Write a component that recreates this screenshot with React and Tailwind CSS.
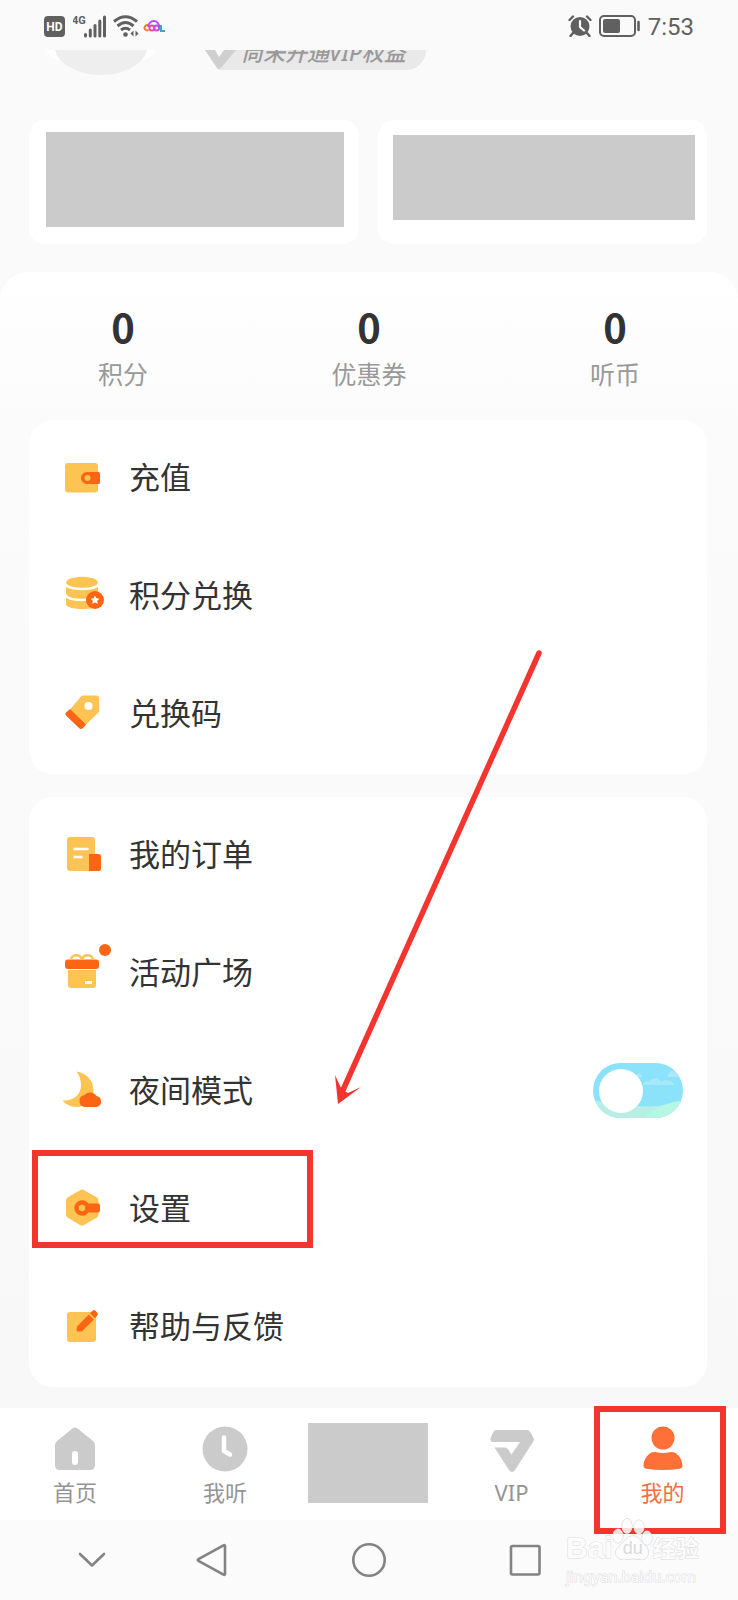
import React, { useState } from 'react'

const YELLOW = '#fdc453';
const ORANGE = '#fb6514';

const WalletIcon = () => (
  <svg viewBox="0 0 44 44" className="w-11 h-11 shrink-0">
    <rect x="5" y="8" width="33" height="29.500" rx="3" fill={YELLOW} />
    <path d="M22 17H38.500Q40 17 40 18.500V27.500Q40 29 38.500 29H27A6 6 0 0 1 27 17Z" fill={ORANGE} />
    <circle cx="27.500" cy="23" r="3" fill={YELLOW} />
  </svg>
)

const CoinsIcon = () => (
  <svg viewBox="0 0 44 44" className="w-11 h-11 shrink-0">
    <path d="M6 9V31C6 33.800 12 36 22 36S38 33.800 38 31V9Z" fill={YELLOW} />
    <path d="M5 10.500C7 15 14 16 22 16S37 15 39 10.500M5 21.500C7 26 14 27 22 27S37 26 39 21.500" fill="none" stroke="#fff" strokeWidth="2.400" />
    <ellipse cx="22" cy="9" rx="15.500" ry="5.200" fill={YELLOW} />
    <circle cx="35" cy="27" r="9" fill={ORANGE} />
    <path d="M35 22.500L36.400 25.300L39.400 25.700L37.200 27.800L37.700 30.800L35 29.400L32.300 30.800L32.800 27.800L30.600 25.700L33.600 25.300Z" fill="#fff" />
  </svg>
)

const TagIcon = () => (
  <svg viewBox="0 0 44 44" className="w-11 h-11 shrink-0">
    <path d="M23 4.500H36.500Q39 4.500 39 7V19.500Q39 21 38 22L25.500 34L10 18.500L20.500 6Q21.500 4.500 23 4.500Z" fill={YELLOW} />
    <path d="M10 18L26 33.500L23 37Q21 39 19 37L6 24.500Q4.500 23 6 21.500Z" fill={ORANGE} />
    <circle cx="28.500" cy="15" r="4" fill="#fff" />
  </svg>
)

const OrderIcon = () => (
  <svg viewBox="0 0 44 44" className="w-11 h-11 shrink-0">
    <rect x="7" y="5" width="28" height="34" rx="3" fill={YELLOW} />
    <path d="M13.500 17H28.500M13.500 25H22.500" stroke="#fff" strokeWidth="2.600" />
    <path d="M29 22H38.500Q41 22 41 24.500V36.500Q41 39 38.500 39H29Z" fill={ORANGE} />
  </svg>
)

const GiftIcon = () => (
  <svg viewBox="0 0 44 44" className="w-11 h-11 shrink-0 overflow-visible">
    <path d="M8 17H36V35Q36 38 33 38H11Q8 38 8 35Z" fill={YELLOW} />
    <path d="M5 18.500H39V20H5Z" fill="#fff" />
    <rect x="5" y="9.500" width="34" height="9.500" rx="3" fill={ORANGE} />
    <path d="M22 9.500C20 3.500 12 4 11 9.500M22 9.500C24 3.500 32 4 33 9.500" fill="none" stroke={YELLOW} strokeWidth="2.600" />
    <rect x="25" y="31" width="7" height="3" fill="#fff" />
    <circle cx="45" cy="0" r="6" fill={ORANGE} />
  </svg>
)

const MoonIcon = () => (
  <svg viewBox="0 0 44 44" className="w-11 h-11 shrink-0">
    <path d="M16.500 3.500C26 5 33.500 12 33.500 22C33.500 32 26 39 16.500 39C10.500 39 5 36 2.500 32.500C12 33.500 21 27.500 21 17.500C21 12 19.500 7.500 16.500 3.500Z" fill={YELLOW} />
    <path d="M25 39A6 6 0 0 1 24 27.200A8 8 0 0 1 36.500 28A5.600 5.600 0 0 1 36.500 39Z" fill={ORANGE} />
  </svg>
)

const SettingsIcon = () => (
  <svg viewBox="0 0 44 44" className="w-11 h-11 shrink-0">
    <path d="M20 4.200Q22 3 24 4.200L37 11.500Q38.500 12.500 38.500 14.500V28.500Q38.500 30.500 37 31.500L24 39Q22 40 20 39L7.500 31.500Q6 30.500 6 28.500V14.500Q6 12.500 7.500 11.500Z" fill={YELLOW} />
    <path d="M28.500 17.500H38Q40 17.500 40 19.500V24.500Q40 26.500 38 26.500H28.500A7.800 7.800 0 1 1 28.500 17.500Z" fill={ORANGE} />
    <circle cx="22" cy="22" r="3.300" fill={YELLOW} />
  </svg>
)

const FeedbackIcon = () => (
  <svg viewBox="0 0 44 44" className="w-11 h-11 shrink-0">
    <rect x="7" y="8" width="29" height="30" rx="3" fill={YELLOW} />
    <path d="M17 22.500L28.800 10.500L33.800 15.500L22 27.200L17.800 27.500Q16.500 27.500 16.600 26.200Z" fill={ORANGE} />
    <path d="M30 9.300L32.500 6.800Q34 5.300 35.500 6.800L37.300 8.700Q38.500 10 37.300 11.500L35 14.200Z" fill={ORANGE} />
  </svg>
)

const HomeIcon = () => (
  <svg viewBox="0 0 46 46" className="w-[46px] h-[46px]">
    <path d="M20.500 2.500Q23 .5 25.500 2.500L41 15Q43 17 43 19V39Q43 44 38 44H8Q3 44 3 39V19Q3 17 5 15Z" fill="#cbcbcb" />
    <path d="M23 28V36" stroke="#fff" strokeWidth="6" strokeLinecap="round" />
  </svg>
)

const ClockIcon = () => (
  <svg viewBox="0 0 46 46" className="w-[46px] h-[46px]">
    <circle cx="23" cy="23" r="22.500" fill="#cbcbcb" />
    <path d="M22 11.500V25L28 28.500" fill="none" stroke="#fff" strokeWidth="4.500" strokeLinecap="round" strokeLinejoin="round" />
  </svg>
)

const VipIcon = () => (
  <svg viewBox="0 0 46 46" className="w-[46px] h-[46px]">
    <path d="M7 4H38Q40 4 41.300 6L44.500 12Q45.500 14 44 16L26 44Q23 48 20 44L5.500 21.500H16Q18 21.500 19 23.200L22.500 28.500L31 16H4Q0 15.500 2 11L4.500 6Q5.500 4 7 4Z" fill="#cbcbcb" />
  </svg>
)

const UserIcon = () => (
  <svg viewBox="0 0 46 46" className="w-[46px] h-[46px]">
    <circle cx="23" cy="12" r="11.500" fill="#ff6f38" />
    <path d="M15.500 26Q23 28 30.500 26C38 25.500 42.500 34 42.500 40Q42.500 42 40 42.700Q23 45.500 6 42.700Q3.500 42 3.500 40C3.500 34 8 25.500 15.500 26Z" fill="#ff6f38" />
  </svg>
)

const accountItems = [
  { label: '充值', Icon: WalletIcon },
  { label: '积分兑换', Icon: CoinsIcon },
  { label: '兑换码', Icon: TagIcon },
]

const stats = [
  { label: '积分', value: 0 },
  { label: '优惠券', value: 0 },
  { label: '听币', value: 0 },
]

const StatusBar = () => (
  <div className="flex items-center justify-between h-[50px] pt-[2px] px-11 text-[#606060]">
    <div className="flex items-center gap-2">
      <svg viewBox="0 0 21 21" className="w-[21px] h-[21px]">
        <rect width="21" height="21" rx="4" fill="#606060" />
        <text x="10.500" y="15" fontSize="12" fontWeight="700" fontFamily="Roboto, sans-serif" textAnchor="middle" fill="#fff">HD</text>
      </svg>
      <svg viewBox="0 0 34 24" className="w-[34px] h-6">
        <text x="-1" y="10" fontSize="11" fontWeight="700" fontFamily="Roboto, sans-serif" fill="#606060">4G</text>
        <path d="M12.500 22V20.500M17.300 22V16M22 22V11.500M26.800 22V7M31.500 22V3" stroke="#606060" strokeWidth="3" strokeLinecap="round" />
      </svg>
      <svg viewBox="0 0 26 24" className="w-[26px] h-6 -ml-[2px]">
        <g fill="none" stroke="#606060" strokeWidth="3">
          <path d="M1 7.500Q12.500 -2 24 7.500" />
          <path d="M4.500 12Q12.500 5 20.500 12" />
          <path d="M8 16Q12.500 12.500 17 16" />
        </g>
        <circle cx="12.500" cy="20.500" r="2.300" fill="#606060" />
        <path d="M20.500 16.500V22.500L17.500 19.500ZM22.500 16.500V22.500L25.500 19.500Z" fill="#606060" />
      </svg>
      <svg viewBox="0 0 22 14" className="w-[22px] h-[14px] -ml-1">
        <g fill="none" strokeWidth="2">
          <path d="M5.500 6.500A2.600 2.600 0 1 0 5.500 11" stroke="#ee7f2d" />
          <path d="M5.500 8A5.300 5.300 0 1 1 16 8" stroke="#c04be8" />
          <circle cx="9" cy="9" r="2.600" stroke="#ee4a8f" />
          <circle cx="13.500" cy="9" r="2.600" stroke="#c04be8" />
          <path d="M18 6V12H22" stroke="#34a9cf" />
        </g>
      </svg>
    </div>
    <div className="flex items-center gap-[7px]">
      <svg viewBox="0 0 24 22" className="w-6 h-[22px]">
        <circle cx="12" cy="11.500" r="9.500" fill="#606060" />
        <path d="M1.500 5L5 1.500M22.500 5L19 1.500M5 18L2.500 21M19 18L21.500 21" stroke="#606060" strokeWidth="2.400" strokeLinecap="round" />
        <path d="M12 6V12L16 15.500" fill="none" stroke="#fff" strokeWidth="2.200" strokeLinecap="round" />
      </svg>
      <svg viewBox="0 0 42 22" className="w-[42px] h-[22px]">
        <rect x="1" y="1" width="35" height="20" rx="4" fill="none" stroke="#606060" strokeWidth="2" />
        <rect x="4" y="4" width="17" height="14" rx="2" fill="#606060" />
        <path d="M39.500 7V15" stroke="#606060" strokeWidth="2.600" strokeLinecap="round" />
      </svg>
      <span className="pt-[2px] text-2xl leading-8 font-[Roboto,sans-serif]">7:53</span>
    </div>
  </div>
)

const MenuRow = ({ label, Icon, children }) => (
  <li className="relative">
    <button type="button" className="flex items-center gap-[25px] w-full h-[118px] pb-1 pl-[31px] text-left">
      <Icon />
      <span className="text-[31px] leading-10">{label}</span>
    </button>
    {children}
  </li>
)

const NightSwitch = ({ checked, onChange }) => (
  <span className="relative block w-[90px] h-[55px] rounded-full overflow-hidden bg-[#8be3fb]">
    <svg viewBox="0 0 90 55" className="block w-full h-full">
      <path d="M42 14C44 9 48 10 49 14ZM50 22C51 17 55 18 56 19C58 14 66 14 68 19C72 16 74 17 76 18C79 17 80 20 81 22ZM74 14C76 8 80 7 83 9C86 6 90 7 90 7V14Z" fill="#a9e7fa" />
      <path d="M0 37Q20 41 45 43T90 38V55H0Z" fill="#b9eee4" />
      <path d="M51 55Q70 38 90 38V55Z" fill="#b5f7e4" />
      <circle cx={checked ? 62 : 28} cy="28" r="22" fill="#fff" />
    </svg>
    <input id="night" type="checkbox" role="switch" checked={checked} onChange={onChange} className="absolute inset-0 w-full h-full opacity-0" />
  </span>
)

const NavItem = ({ label, Icon, active }) => (
  <a href="#" className={active ? 'flex flex-col items-center pt-[18px] text-[#f2703f]' : 'flex flex-col items-center pt-[18px] text-[#949494]'}>
    <Icon />
    <span className="mt-[6px] text-[22px] leading-7">{label}</span>
  </a>
)

const App = () => {
  const [night, setNight] = useState(false);

  return (
    <div className="relative flex flex-col min-h-screen bg-[#fafafa] text-[#333] font-['Noto_Sans','Noto_Sans_CJK_SC',sans-serif]">
      <StatusBar />

      {/* Profile header, scrolled under the status bar */}
      <header className="flex items-start h-[70px] pl-[46px]">
        <svg viewBox="0 0 110 26" className="w-[110px] h-[26px] shrink-0">
          <path d="M0 0H110Q107 7 98 10H12Q3 7 0 0Z" fill="#fff" />
          <path d="M9 0H101Q99 9 90 15Q75 25 55 25T20 15Q11 9 9 0Z" fill="#eee" />
        </svg>
        <div className="flex items-end h-5 ml-[49px] pr-5 rounded-br-[20px] overflow-hidden bg-linear-to-r from-transparent from-10% to-[#e9e9e9] to-10%">
          <svg viewBox="0 0 32 20" className="w-8 h-5 shrink-0">
            <path d="M14 20L28 0H32V20Z" fill="#e9e9e9" />
            <path d="M0 0H10L14 7L19 0H31L15 19Q13 20 12 18Z" fill="#cfcfcf" />
          </svg>
          <span className="ml-1 mb-1 text-[22px] leading-7 font-medium italic whitespace-nowrap text-[#999]">尚未开通VIP权益</span>
        </div>
      </header>

      <div className="grid grid-cols-2 gap-[19px] pl-[29px] pr-[31px]">
        <div className="h-[124px] pt-3 pb-[17px] pl-[17px] pr-[15px] rounded-2xl bg-white">
          <div className="h-full bg-[#cbcbcb]" />
        </div>
        <div className="h-[124px] pt-[15px] pb-6 pl-[15px] pr-3 rounded-2xl bg-white">
          <div className="h-full bg-[#cbcbcb]" />
        </div>
      </div>

      <section className="grid grid-cols-3 h-[148px] mt-7 pt-[26px] rounded-t-[28px] text-center bg-linear-to-b from-white to-[#fbfbfb]">
        {stats.map((item) => (
          <div key={item.label}>
            <p className="text-[40px] leading-[56px] font-bold font-['Noto_Sans_CJK_SC',sans-serif]">{item.value}</p>
            <p className="text-[25px] leading-10 text-[#999]">{item.label}</p>
          </div>
        ))}
      </section>

      <main className="flex flex-col gap-[23px] pl-[29px] pr-[31px] pb-[21px] bg-linear-to-b from-[#fbfbfb] to-[#f8f8f8]">
        <ul className="rounded-3xl bg-white">
          {accountItems.map((item) => <MenuRow key={item.label} {...item} />)}
        </ul>

        <ul className="rounded-3xl bg-white">
          <MenuRow label="我的订单" Icon={OrderIcon} />
          <MenuRow label="活动广场" Icon={GiftIcon} />
          <li className="flex items-center justify-between h-[118px] pb-1 pl-[31px] pr-6">
            <label htmlFor="night" className="flex items-center gap-[25px]">
              <MoonIcon />
              <span className="text-[31px] leading-10">夜间模式</span>
            </label>
            <NightSwitch checked={night} onChange={() => setNight(!night)} />
          </li>
          <MenuRow label="设置" Icon={SettingsIcon}>
            <div className="absolute left-[3px] -top-px w-[281px] h-[98px] border-[6px] border-[#f4342e] pointer-events-none" />
          </MenuRow>
          <MenuRow label="帮助与反馈" Icon={FeedbackIcon} />
        </ul>
      </main>

      <nav className="relative z-10 grid grid-cols-[150fr_150fr_136fr_151fr_151fr] h-28 bg-white">
        <NavItem label="首页" Icon={HomeIcon} />
        <NavItem label="我听" Icon={ClockIcon} />
        <div className="w-[120px] h-20 mt-[15px] mx-auto bg-[#cbcbcb]" />
        <NavItem label="VIP" Icon={VipIcon} />
        <NavItem label="我的" Icon={UserIcon} active />
        <div className="absolute right-3 -top-[2px] w-[132px] h-[128px] border-[6px] border-[#f4342e] pointer-events-none" />
      </nav>

      {/* System navigation */}
      <div className="grid grid-cols-[120fr_118fr_198fr_114fr_156fr] items-center h-20 pl-8 bg-[#fbfbfb]">
        <button type="button" aria-label="收起" className="flex justify-center">
          <svg viewBox="0 0 28 16" className="w-7 h-4"><path d="M2 2L14 13.500L26 2" fill="none" stroke="#838383" strokeWidth="2.600" strokeLinecap="round" strokeLinejoin="round" /></svg>
        </button>
        <button type="button" aria-label="返回" className="flex justify-center">
          <svg viewBox="0 0 32 36" className="w-8 h-9"><path d="M28.500 3.500Q30 2.500 30 4V32Q30 33.500 28.500 32.500L3.500 19Q2 18 3.500 17Z" fill="none" stroke="#838383" strokeWidth="2.600" /></svg>
        </button>
        <button type="button" aria-label="主屏幕" className="flex justify-center">
          <svg viewBox="0 0 36 36" className="w-9 h-9"><circle cx="18" cy="18" r="15.700" fill="none" stroke="#838383" strokeWidth="2.600" /></svg>
        </button>
        <button type="button" aria-label="最近任务" className="flex justify-center">
          <svg viewBox="0 0 32 32" className="w-8 h-8"><rect x="2" y="2" width="28.500" height="28.500" rx="1.500" fill="none" stroke="#838383" strokeWidth="2.600" /></svg>
        </button>
      </div>

      <div className="absolute z-20 right-[38px] bottom-3 w-[134px] text-[#fcfcfc] pointer-events-none [-webkit-text-stroke:1px_#dcdcdc] [paint-order:stroke_fill]">
        <div className="flex items-end h-[50px]">
          <span className="text-[30px] leading-8 font-bold font-['Liberation_Sans',sans-serif]">Bai</span>
          <span className="relative block w-10 h-[50px] shrink-0">
            <svg viewBox="0 0 40 50" className="w-10 h-[50px]">
              <g fill="#fbfbfb" fillOpacity=".85" stroke="#d4d4d4" strokeWidth="1">
                <ellipse cx="5" cy="22" rx="5" ry="7" />
                <ellipse cx="14" cy="12" rx="5" ry="7.500" />
                <ellipse cx="26" cy="13" rx="5" ry="7" />
                <ellipse cx="34" cy="24" rx="5" ry="7" />
                <path d="M20 22C26 22 27 27 32 31C39 38 34 47 27 45.500Q20 44 13 45.500C4 47 -1 39 6 32C12 27 14 22 20 22Z" />
              </g>
            </svg>
            <span className="absolute inset-x-0 bottom-1 text-center text-lg leading-6 text-[#dadada] font-['Liberation_Sans',sans-serif] [-webkit-text-stroke:0]">du</span>
          </span>
          <span className="text-[23px] leading-8 font-bold whitespace-nowrap">经验</span>
        </div>
        <p className="text-[15px] leading-6 whitespace-nowrap">jingyan.baidu.com</p>
      </div>

      <svg viewBox="0 0 210 456" className="absolute left-[333px] top-[650px] w-[210px] h-[456px] pointer-events-none">
        <path d="M206 3L10 440" stroke="#f4342e" strokeWidth="5.500" strokeLinecap="round" />
        <path d="M5 454L2 425L9 440L15 443L28 437Z" fill="#f4342e" />
      </svg>
    </div>
  )
}

export default App
